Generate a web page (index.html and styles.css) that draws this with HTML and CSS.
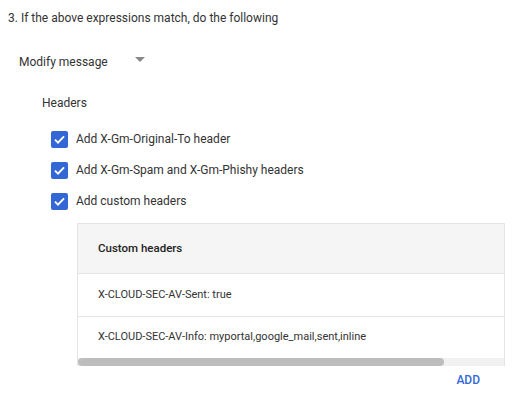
FILE: index.html
```html
<!DOCTYPE html>
<html lang="en">
<head>
  <meta charset="UTF-8">
  <title>Modify message</title>
  <link rel="stylesheet" href="styles.css">
</head>
<body>
  <div class="step-title">3. If the above expressions match, do the following</div>

  <div class="action-select">
    <span class="action-label">Modify message</span>
    <span class="caret"></span>
  </div>

  <div class="section">
    <div class="section-title">Headers</div>
    <ul class="check-list">
      <li class="check-row"><span class="box"><svg viewBox="0 0 18 18"><path d="M4.2 9.2l3.2 3.1 6.4-6.6"/></svg></span>Add X-Gm-Original-To header</li>
      <li class="check-row"><span class="box"><svg viewBox="0 0 18 18"><path d="M4.2 9.2l3.2 3.1 6.4-6.6"/></svg></span>Add X-Gm-Spam and X-Gm-Phishy headers</li>
      <li class="check-row"><span class="box"><svg viewBox="0 0 18 18"><path d="M4.2 9.2l3.2 3.1 6.4-6.6"/></svg></span>Add custom headers</li>
    </ul>

    <div class="headers-table">
      <div class="table-head">Custom headers</div>
      <div class="table-row">X-CLOUD-SEC-AV-Sent: true</div>
      <div class="table-row last">X-CLOUD-SEC-AV-Info: myportal,google_mail,sent,inline</div>
      <div class="scroll-track"><div class="scroll-thumb"></div></div>
    </div>

    <div class="actions">
      <button class="add-btn">ADD</button>
    </div>
  </div>
</body>
</html>
```

FILE: styles.css
```css
/* --- page --- */
body {
  margin: 0;
  padding: 10px 0 0 8px;
  font-family: Roboto, "Liberation Sans", sans-serif;
  font-size: 12px;
  color: #333;
  background: #fff;
}
.step-title {
  line-height: 16px;
}
/* --- action dropdown --- */
.action-select {
  display: flex;
  align-items: center;
  margin: 28px 0 0 11px;
  height: 16px;
}
.action-label {
  width: 116px;
}
.caret {
  width: 0;
  height: 0;
  border-left: 5px solid transparent;
  border-right: 5px solid transparent;
  border-top: 5px solid #888;
  margin-top: -5px;
}
/* --- headers section --- */
.section {
  margin-left: 34px;
  padding-top: 25px;
}
.section-title {
  line-height: 16px;
}
.check-list {
  list-style: none;
  margin: 19px 0 0 9px;
  padding: 0;
}
.check-row {
  display: flex;
  align-items: center;
  gap: 8px;
  height: 18px;
  margin-bottom: 13px;
}
.box {
  width: 17px;
  height: 17px;
  border-radius: 2px;
  background: #3367d6;
  display: flex;
}
.box svg {
  width: 17px;
  height: 17px;
  fill: none;
  stroke: #fff;
  stroke-width: 2;
}
/* --- custom headers table --- */
.headers-table {
  margin: 12px 0 0 35px;
  width: 428px;
  border: 1px solid #e4e4e4;
  border-bottom: none;
  box-sizing: border-box;
}
.table-head {
  height: 49px;
  line-height: 49px;
  padding-left: 20px;
  background: #f5f5f5;
  border-bottom: 1px solid #e4e4e4;
  font-size: 11.5px;
  font-weight: 500;
  color: #222;
}
.table-row {
  height: 42px;
  line-height: 42px;
  padding-left: 20px;
  border-bottom: 1px solid #e4e4e4;
  font-size: 11px;
  white-space: nowrap;
}
.table-row.last {
  border-bottom: none;
  height: 41px;
  line-height: 40px;
}
.scroll-track {
  height: 8px;
  background: #f1f1f1;
}
.scroll-thumb {
  width: 366px;
  height: 8px;
  border-radius: 4px;
  background: #bdbdbd;
}
.actions {
  width: 438px;
  display: flex;
  justify-content: flex-end;
}
.add-btn {
  border: none;
  background: none;
  padding: 7px 0 0;
  font-family: inherit;
  font-size: 12px;
  font-weight: 500;
  color: #3367d6;
  cursor: pointer;
}
```
